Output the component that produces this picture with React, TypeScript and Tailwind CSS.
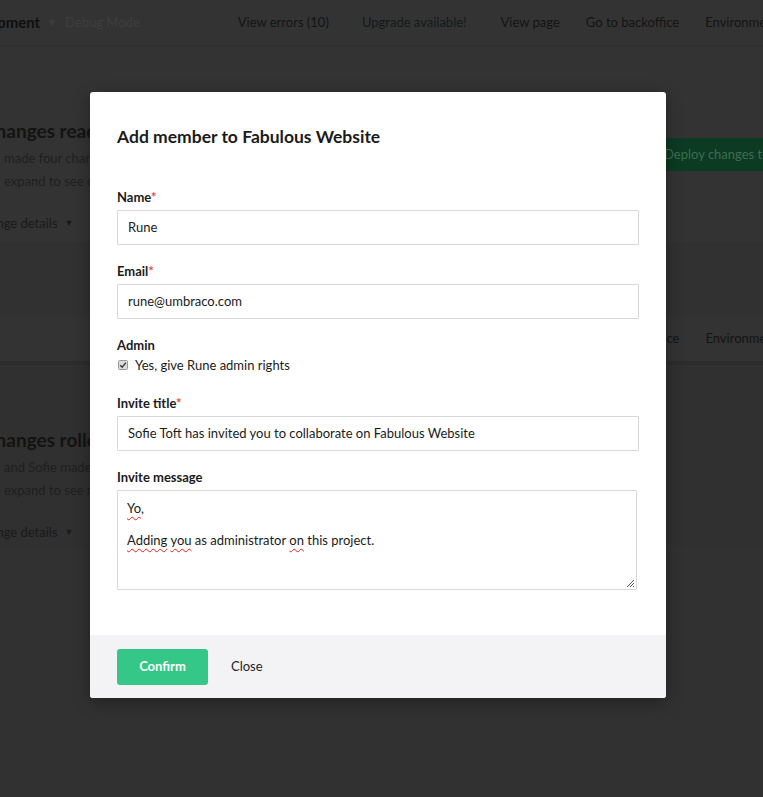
import React from 'react'

const lato = { fontFamily: 'Lato, "Open Sans", sans-serif' }

function NavLinks() {
  return (
    <div className="flex items-center text-[#141414]">
      <span>View errors (10)</span>
      <span className="ml-[33px] text-[#121a1a]">Upgrade available!</span>
      <span className="ml-[34px]">View page</span>
      <span className="ml-[26px]">Go to backoffice</span>
      <span className="ml-[26px]">Environments</span>
    </div>
  )
}

function TopNav({ brand }: { brand?: boolean }) {
  return (
    <div className="flex items-center h-[45px] text-[13px] whitespace-nowrap">
      {brand ? (
        <>
          <span className="font-bold text-[15px] text-[#101010] -ml-[50px]">Development</span>
          <span className="ml-[7px] text-[10px] text-[#3d3d3d]">▼</span>
          <span className="ml-[8px] text-[#3e3e3e]">Debug Mode</span>
          <div className="ml-[98px]">
            <NavLinks />
          </div>
        </>
      ) : (
        <div className="ml-[238px]">
          <NavLinks />
        </div>
      )}
    </div>
  )
}

function ChangeSection({ title, line1, line2 }: { title: string; line1: string; line2: string }) {
  return (
    <div className="whitespace-nowrap text-[#131313]">
      <div className="font-bold text-[19px] -ml-[17px] leading-[26px]">{title}</div>
      <div className="mt-[3px] text-[13px] leading-[23px] text-[#1f1f1f]">
        <div className="ml-[4px]">{line1}</div>
        <div className="ml-[4px]">{line2}</div>
      </div>
      <div className="mt-[20px] text-[13px] leading-[20px] flex items-center text-[#1a1a1a]">
        <span className="-ml-[26px]">Change details</span>
        <span className="ml-[7px] text-[9px]">▼</span>
      </div>
    </div>
  )
}

function Field({ label, required, children }: { label: string; required?: boolean; children: React.ReactNode }) {
  return (
    <div className="mb-[18px]">
      <div className="text-[13px] font-bold text-[#1b1b1b] leading-[16px] mb-[5px]">
        {label}
        {required && <span className="text-[#e5484d]">*</span>}
      </div>
      {children}
    </div>
  )
}

function TextInput({ value }: { value: string }) {
  return (
    <div className="h-[35px] border border-[#d8d8d8] rounded-[1px] px-[10px] flex items-center text-[13px] text-[#1b1b1b]">
      {value}
    </div>
  )
}

const squiggle = 'underline decoration-wavy decoration-[#e0201a] decoration-[1px] underline-offset-[3px]'

export default function App() {
  return (
    <div className="relative w-[763px] h-[797px] overflow-hidden bg-[#333333]" style={lato}>
      {/* dimmed page behind the dialog */}
      <div className="border-b border-[#2e2e2e]">
        <TopNav brand />
      </div>
      <div className="relative h-[196px] pt-[72px]">
        <ChangeSection
          title="Changes ready to deploy"
          line1="made four changes since last deployment"
          line2="expand to see details"
        />
        <div className="absolute left-[640px] top-[92px] h-[33px] w-[160px] bg-[#0c3a22] rounded-[2px] flex items-center pl-[24px] text-[13px] text-[#3b6e52] whitespace-nowrap">
          Deploy changes to Live
        </div>
      </div>
      <div className="h-[74px] bg-[#313131]" />
      <div className="border-b-[4px] border-[#2c2c2c]">
        <TopNav />
      </div>
      <div className="h-[182px] bg-[#303030] pt-[62px]">
        <ChangeSection
          title="Changes rolled back"
          line1="and Sofie made two changes that were rolled back"
          line2="expand to see more"
        />
      </div>
      <div className="h-[300px] bg-[#313131]" />

      {/* dialog */}
      <div className="absolute left-[90px] top-[92px] w-[576px] bg-white rounded-[3px] shadow-[0_4px_16px_rgba(0,0,0,0.35)] overflow-hidden">
        <div className="px-[27px] pt-[32px] pb-[45px]">
          <h2 className="text-[17.5px] font-bold text-[#1b1b1b] leading-[26px] mb-[39px]">
            Add member to Fabulous Website
          </h2>
          <Field label="Name" required>
            <TextInput value="Rune" />
          </Field>
          <Field label="Email" required>
            <TextInput value="rune@umbraco.com" />
          </Field>
          <div className="mb-[22px]">
            <div className="text-[13px] font-bold text-[#1b1b1b] leading-[16px] mb-[4px]">Admin</div>
            <div className="flex items-center text-[13px] text-[#1b1b1b] leading-[16px]">
              <svg width="10" height="10" viewBox="0 0 10 10" className="ml-[1px]">
                <rect x="0.5" y="0.5" width="9" height="9" rx="1" fill="#dcdcdc" stroke="#9a9a9a" />
                <path d="M2.2 5.2 L4.2 7.2 L7.9 2.6" fill="none" stroke="#3a3a3a" strokeWidth="1.4" />
              </svg>
              <span className="ml-[7px]">Yes, give Rune admin rights</span>
            </div>
          </div>
          <Field label="Invite title" required>
            <TextInput value="Sofie Toft has invited you to collaborate on Fabulous Website" />
          </Field>
          <div>
            <div className="text-[13px] font-bold text-[#1b1b1b] leading-[16px] mb-[5px]">Invite message</div>
            <div className="relative h-[100px] w-[520px] border border-[#d8d8d8] rounded-[1px] px-[9px] pt-[9px] text-[13px] leading-[16px] text-[#1b1b1b]">
              <div>
                <span className={squiggle}>Yo</span>,
              </div>
              <div>&nbsp;</div>
              <div>
                <span className={squiggle}>Adding</span> <span className={squiggle}>you</span> as administrator{' '}
                <span className={squiggle}>on</span> this project.
              </div>
              <svg width="10" height="10" viewBox="0 0 10 10" className="absolute right-[1px] bottom-[1px]">
                <path d="M9 2 L2 9 M9 5 L5 9 M9 8 L8 9" stroke="#555" strokeWidth="1" />
              </svg>
            </div>
          </div>
        </div>
        <div className="h-[63px] bg-[#f3f3f5] px-[27px] flex items-center">
          <button className="w-[91px] h-[36px] rounded-[3px] bg-[#35c787] text-white text-[13px] font-bold">
            Confirm
          </button>
          <button className="ml-[23px] text-[13px] text-[#1f1f1f]">Close</button>
        </div>
      </div>
    </div>
  )
}
